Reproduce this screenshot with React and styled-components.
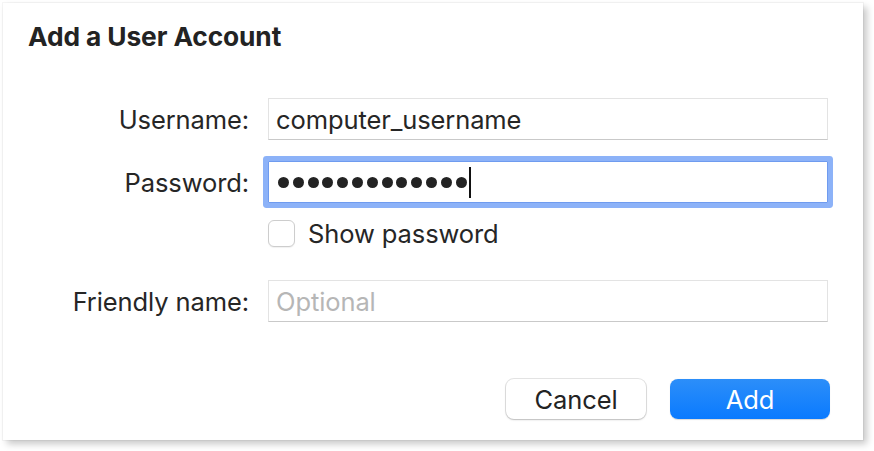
import React from "react";
import styled, { createGlobalStyle } from "styled-components";

const GlobalStyle = createGlobalStyle`
  html, body {
    margin: 0;
    background: #ffffff;
  }
  body {
    font-family: Inter, "Helvetica Neue", "Liberation Sans", Arial, sans-serif;
    -webkit-font-smoothing: antialiased;
  }
`;

const Page = styled.div`
  padding: 3px 0 0 3px;
  width: 874px;
  height: 451px;
  box-sizing: border-box;
`;

const Panel = styled.div`
  width: 860px;
  height: 437px;
  box-sizing: border-box;
  background: #fff;
  box-shadow: 0 0 0 1px rgba(0, 0, 0, 0.035), 4px 4px 7px rgba(0, 0, 0, 0.22);
  padding: 18px 0 0 25px;
  display: flex;
  flex-direction: column;
`;

const Title = styled.h1`
  margin: 0;
  font-size: 26.3px;
  line-height: 32px;
  font-weight: 700;
  color: #232323;
  letter-spacing: -0.1px;
`;

const Row = styled.div`
  display: grid;
  grid-template-columns: 221px 560px;
  column-gap: 19px;
  align-items: center;
  margin-top: ${(p) => p.$top}px;
`;

const Label = styled.label`
  text-align: right;
  font-size: 25.5px;
  color: #262626;
  letter-spacing: -0.1px;
`;

const Field = styled.div`
  height: 42px;
  box-sizing: border-box;
  display: flex;
  align-items: center;
  padding-left: 7px;
  background: #fff;
  border: 1px solid #e3e3e3;
  border-bottom-color: #c9c9c9;
  font-size: 25.5px;
  color: ${(p) => (p.$placeholder ? "#b6b6b6" : "#262626")};
  letter-spacing: -0.1px;
  ${(p) =>
    p.$focused &&
    `
    border: 1px solid #6f9bef;
    box-shadow: 0 0 0 5px #8cb2f8;
    border-radius: 1px;
    padding-left: 9px;
  `}
`;

const Dots = styled.div`
  display: flex;
  align-items: center;
  gap: 3.8px;
`;

const Dot = styled.span`
  width: 11px;
  height: 11px;
  border-radius: 50%;
  background: #232323;
`;

const Caret = styled.span`
  width: 2px;
  height: 31px;
  background: #111;
  margin-left: 2px;
`;

const CheckRow = styled.label`
  grid-column: 2;
  display: flex;
  align-items: center;
  gap: 13px;
  height: 27px;
  line-height: 27px;
  font-size: 25.5px;
  color: #262626;
  letter-spacing: -0.1px;
`;

const Box = styled.span`
  width: 27px;
  height: 27px;
  box-sizing: border-box;
  border: 1px solid #cdcdcd;
  border-radius: 6px;
  background: #fff;
  box-shadow: 0 1px 1px rgba(0, 0, 0, 0.06);
`;

const Buttons = styled.div`
  display: flex;
  justify-content: flex-end;
  gap: 24px;
  margin-top: 57px;
  padding-right: 33px;
`;

const Button = styled.button`
  width: ${(p) => p.$width}px;
  height: 40px;
  border-radius: 8px;
  font-family: inherit;
  font-size: 25.5px;
  letter-spacing: -0.1px;
  cursor: pointer;
  border: none;
  background: ${(p) =>
    p.$primary ? "linear-gradient(#2c8ef9, #0a7aff)" : "#fff"};
  color: ${(p) => (p.$primary ? "#fff" : "#232323")};
  box-shadow: ${(p) =>
    p.$primary
      ? "0 0.5px 1px rgba(0, 0, 0, 0.15)"
      : "0 0 0 1px rgba(0, 0, 0, 0.1), 0 1px 2px rgba(0, 0, 0, 0.18)"};
`;

export default function App() {
  return (
    <Page>
      <GlobalStyle />
      <Panel>
        <Title>Add a User Account</Title>

        <Row $top={45}>
          <Label>Username:</Label>
          <Field>computer_username</Field>
        </Row>

        <Row $top={21}>
          <Label>Password:</Label>
          <Field $focused>
            <Dots>
              {Array.from({ length: 13 }).map((_, i) => (
                <Dot key={i} />
              ))}
            </Dots>
            <Caret />
          </Field>
        </Row>

        <Row $top={17}>
          <CheckRow>
            <Box />
            Show password
          </CheckRow>
        </Row>

        <Row $top={33}>
          <Label>Friendly name:</Label>
          <Field $placeholder>Optional</Field>
        </Row>

        <Buttons>
          <Button $width={140}>Cancel</Button>
          <Button $width={160} $primary>
            Add
          </Button>
        </Buttons>
      </Panel>
    </Page>
  );
}
